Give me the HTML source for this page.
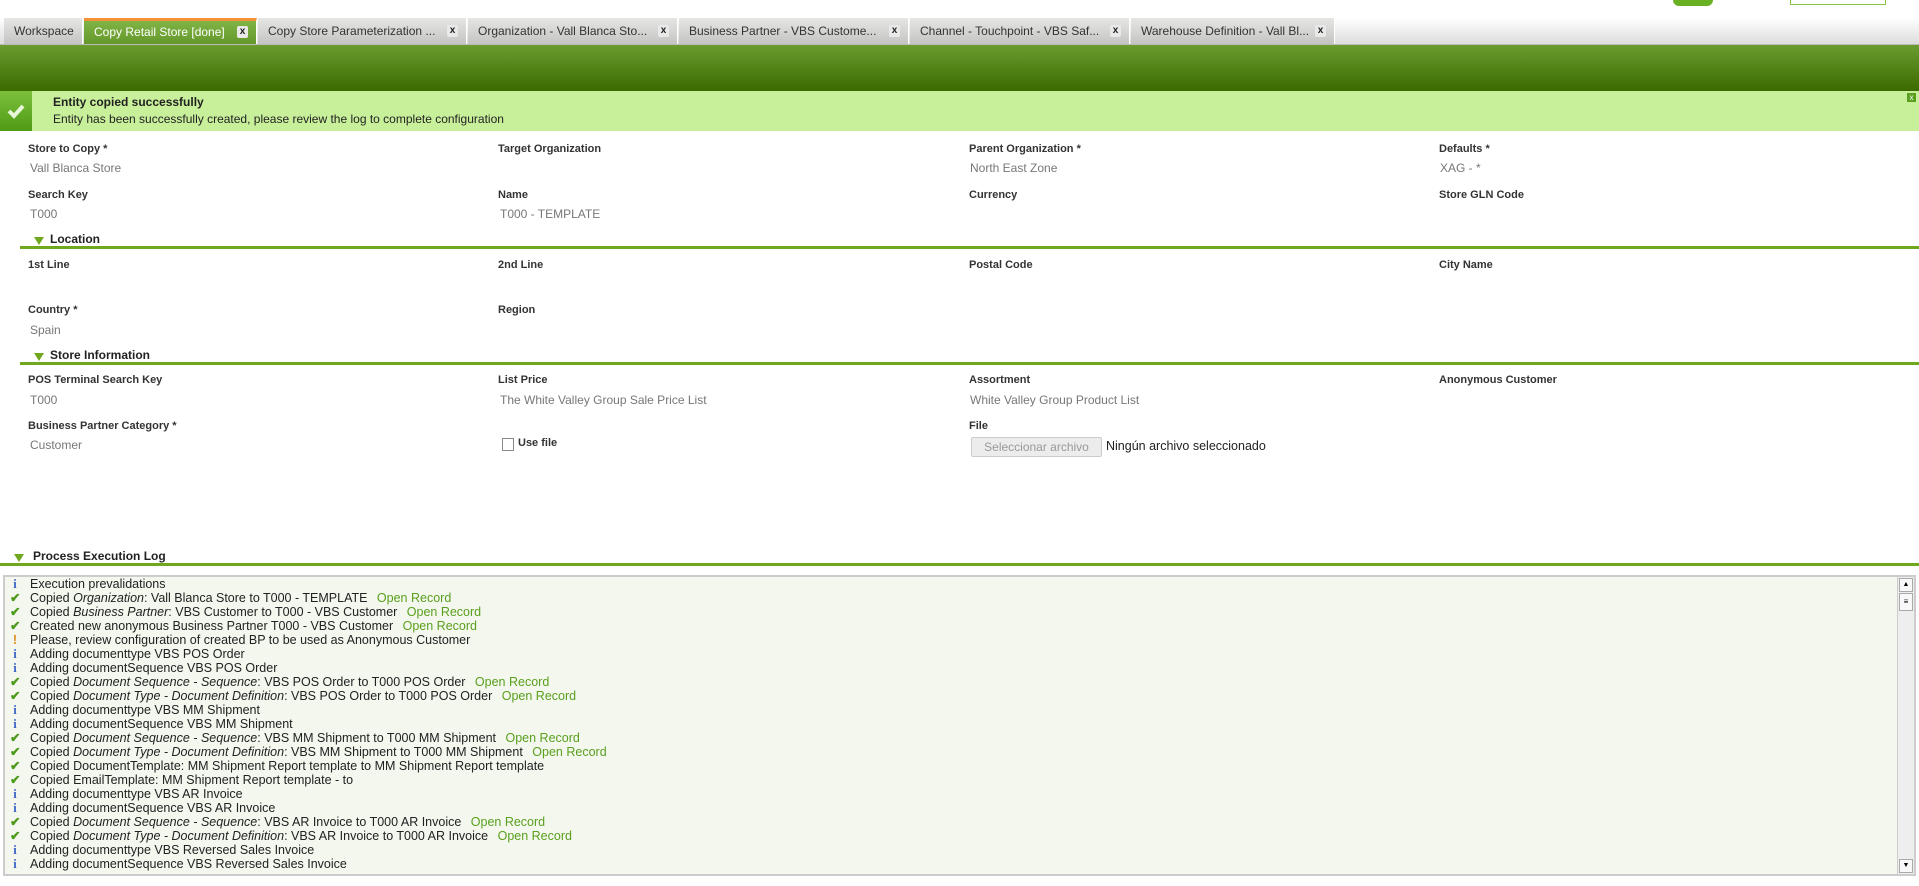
<!DOCTYPE html>
<html><head><meta charset="utf-8"><style>
*{margin:0;padding:0;box-sizing:border-box}
body{width:1919px;height:886px;overflow:hidden;background:#fff;font-family:"Liberation Sans",Arial,sans-serif;position:relative}
.abs{position:absolute}
.tabbar{top:18px;left:0;width:1919px;height:27px;background:linear-gradient(#fff,#ddd);border-bottom:1px solid #bbb}
.tab{position:absolute;top:0;height:26px;background:linear-gradient(#e6e6e4,#c4c4c2);border-right:1px solid #fff;font-size:12px;color:#333;line-height:26px;padding-left:10px;white-space:nowrap;overflow:hidden}
.tab .x{position:absolute;right:8px;top:7px;width:11px;height:12px;background:#e9e9e9;border-radius:2px;font-size:10px;line-height:12px;text-align:center;color:#222;font-weight:bold}
.tab.act{background:linear-gradient(#80b446,#65982b);color:#fff;border-top:3px solid #f39038;line-height:22px}
.tab.act .x{top:5px}
.hdr{top:45px;left:0;width:1919px;height:46px;background:linear-gradient(#6a9c30,#3c6b00)}
.msg{top:91px;left:0;width:1919px;height:40px;background:#c8f09a}
.msg .ic{position:absolute;left:0;top:0;width:32px;height:40px;background:linear-gradient(#7cc03c,#4f9a16)}
.msg .t1{position:absolute;left:53px;top:4px;font-size:12px;font-weight:bold;color:#222}
.msg .t2{position:absolute;left:53px;top:21px;font-size:12px;color:#222}
.lbl{position:absolute;font-size:11px;font-weight:bold;color:#333}
.val{position:absolute;font-size:12px;color:#777}
.sec{position:absolute;left:20px;width:1899px;height:14px;border-bottom:3px solid #6fa81e;font-size:12px;font-weight:bold;color:#222}
.sec span{position:absolute;left:30px;top:-3px}
.sec i{position:absolute;left:14px;top:2px;width:0;height:0;border-left:5px solid transparent;border-right:5px solid transparent;border-top:8px solid #6fa81e}
.log{top:575px;left:3px;width:1913px;height:301px;background:#f3f7ee;border:2px solid #ccc}
.row{position:absolute;left:30px;font-size:12.5px;color:#222;white-space:nowrap;height:14px;line-height:14px}
.row b{position:absolute;left:-20px;font-weight:bold;width:10px;text-align:center}
.i{color:#3c64c8;font-family:"Liberation Serif",serif}
.c{color:#4c9a1a}
.e{color:#e08a1a}
.o{color:#5aa01e;margin-left:6px}
</style></head><body>
<div class="abs" style="top:0;left:1673px;width:40px;height:6px;background:#6ab023;border-radius:0 0 20px 20px"></div>
<div class="abs" style="top:0;left:1790px;width:96px;height:5px;border:1px solid #8bc34a;border-top:none"></div>
<div class="abs tabbar">
<div class="tab" style="left:4px;width:79px">Workspace</div>
<div class="tab act" style="left:84px;width:173px">Copy Retail Store [done]<span class="x">x</span></div>
<div class="tab" style="left:258px;width:209px">Copy Store Parameterization ...<span class="x">x</span></div>
<div class="tab" style="left:468px;width:210px">Organization - Vall Blanca Sto...<span class="x">x</span></div>
<div class="tab" style="left:679px;width:230px">Business Partner - VBS Custome...<span class="x">x</span></div>
<div class="tab" style="left:910px;width:220px">Channel - Touchpoint - VBS Saf...<span class="x">x</span></div>
<div class="tab" style="left:1131px;width:204px">Warehouse Definition - Vall Bl...<span class="x">x</span></div>
</div>
<div class="abs hdr"></div>
<div class="abs msg"><div class="ic"><svg width="32" height="40"><path d="M9 20l5 5 9-10" stroke="#e8f5d8" stroke-width="4" fill="none"/></svg></div>
<div class="t1">Entity copied successfully</div><div class="t2">Entity has been successfully created, please review the log to complete configuration</div>
<div style="position:absolute;right:3px;top:2px;width:9px;height:9px;background:#5aa01e;color:#fff;font-size:8px;line-height:9px;text-align:center">x</div></div>

<div class="lbl" style="left:28px;top:143px">Store to Copy *</div><div class="val" style="left:30px;top:161px">Vall Blanca Store</div>
<div class="lbl" style="left:498px;top:143px">Target Organization</div>
<div class="lbl" style="left:969px;top:143px">Parent Organization *</div><div class="val" style="left:970px;top:161px">North East Zone</div>
<div class="lbl" style="left:1439px;top:143px">Defaults *</div><div class="val" style="left:1440px;top:161px">XAG - *</div>
<div class="lbl" style="left:28px;top:189px">Search Key</div><div class="val" style="left:30px;top:207px">T000</div>
<div class="lbl" style="left:498px;top:189px">Name</div><div class="val" style="left:500px;top:207px">T000 - TEMPLATE</div>
<div class="lbl" style="left:969px;top:189px">Currency</div>
<div class="lbl" style="left:1439px;top:189px">Store GLN Code</div>
<div class="sec" style="top:235px"><i></i><span>Location</span></div>
<div class="lbl" style="left:28px;top:259px">1st Line</div>
<div class="lbl" style="left:498px;top:259px">2nd Line</div>
<div class="lbl" style="left:969px;top:259px">Postal Code</div>
<div class="lbl" style="left:1439px;top:259px">City Name</div>
<div class="lbl" style="left:28px;top:304px">Country *</div><div class="val" style="left:30px;top:323px">Spain</div>
<div class="lbl" style="left:498px;top:304px">Region</div>
<div class="sec" style="top:351px"><i></i><span>Store Information</span></div>
<div class="lbl" style="left:28px;top:374px">POS Terminal Search Key</div><div class="val" style="left:30px;top:393px">T000</div>
<div class="lbl" style="left:498px;top:374px">List Price</div><div class="val" style="left:500px;top:393px">The White Valley Group Sale Price List</div>
<div class="lbl" style="left:969px;top:374px">Assortment</div><div class="val" style="left:970px;top:393px">White Valley Group Product List</div>
<div class="lbl" style="left:1439px;top:374px">Anonymous Customer</div>
<div class="lbl" style="left:28px;top:420px">Business Partner Category *</div><div class="val" style="left:30px;top:438px">Customer</div>
<div class="abs" style="left:502px;top:438px;width:12px;height:13px;border:1px solid #888;background:#fff"></div>
<div class="lbl" style="left:518px;top:437px;font-size:11px">Use file</div>
<div class="lbl" style="left:969px;top:420px">File</div>
<div class="abs" style="left:971px;top:437px;width:131px;height:20px;background:#ececec;border:1px solid #ccc;border-radius:2px;font-size:12px;color:#999;line-height:18px;text-align:center">Seleccionar archivo</div>
<div class="abs" style="left:1106px;top:439px;font-size:12.5px;color:#222">Ningún archivo seleccionado</div>

<div class="sec" style="top:552px;left:0;width:1919px"><i></i><span style="left:33px">Process Execution Log</span></div>
<div class="abs log">
<div class="abs" style="right:0;top:0;width:17px;height:297px;background:#eee;border-left:1px solid #ccc">
<div style="position:absolute;left:1px;top:1px;width:14px;height:14px;background:#f8f8f8;border:1px solid #aaa;font-size:7px;text-align:center;line-height:12px">▲</div>
<div style="position:absolute;left:1px;top:16px;width:14px;height:18px;background:#f8f8f8;border:1px solid #aaa;font-size:8px;text-align:center;line-height:16px">≡</div>
<div style="position:absolute;left:1px;bottom:1px;width:14px;height:14px;background:#f8f8f8;border:1px solid #aaa;font-size:7px;text-align:center;line-height:12px">▼</div>
</div>
</div>
<div class="row" style="top:577px"><b class="i">i</b>Execution prevalidations</div>
<div class="row" style="top:591px"><b class="c">✔</b>Copied <i>Organization</i>: Vall Blanca Store to T000 - TEMPLATE <span class="o">Open Record</span></div>
<div class="row" style="top:605px"><b class="c">✔</b>Copied <i>Business Partner</i>: VBS Customer to T000 - VBS Customer <span class="o">Open Record</span></div>
<div class="row" style="top:619px"><b class="c">✔</b>Created new anonymous Business Partner T000 - VBS Customer <span class="o">Open Record</span></div>
<div class="row" style="top:633px"><b class="e">!</b>Please, review configuration of created BP to be used as Anonymous Customer</div>
<div class="row" style="top:647px"><b class="i">i</b>Adding documenttype VBS POS Order</div>
<div class="row" style="top:661px"><b class="i">i</b>Adding documentSequence VBS POS Order</div>
<div class="row" style="top:675px"><b class="c">✔</b>Copied <i>Document Sequence - Sequence</i>: VBS POS Order to T000 POS Order <span class="o">Open Record</span></div>
<div class="row" style="top:689px"><b class="c">✔</b>Copied <i>Document Type - Document Definition</i>: VBS POS Order to T000 POS Order <span class="o">Open Record</span></div>
<div class="row" style="top:703px"><b class="i">i</b>Adding documenttype VBS MM Shipment</div>
<div class="row" style="top:717px"><b class="i">i</b>Adding documentSequence VBS MM Shipment</div>
<div class="row" style="top:731px"><b class="c">✔</b>Copied <i>Document Sequence - Sequence</i>: VBS MM Shipment to T000 MM Shipment <span class="o">Open Record</span></div>
<div class="row" style="top:745px"><b class="c">✔</b>Copied <i>Document Type - Document Definition</i>: VBS MM Shipment to T000 MM Shipment <span class="o">Open Record</span></div>
<div class="row" style="top:759px"><b class="c">✔</b>Copied DocumentTemplate: MM Shipment Report template to MM Shipment Report template</div>
<div class="row" style="top:773px"><b class="c">✔</b>Copied EmailTemplate: MM Shipment Report template - to</div>
<div class="row" style="top:787px"><b class="i">i</b>Adding documenttype VBS AR Invoice</div>
<div class="row" style="top:801px"><b class="i">i</b>Adding documentSequence VBS AR Invoice</div>
<div class="row" style="top:815px"><b class="c">✔</b>Copied <i>Document Sequence - Sequence</i>: VBS AR Invoice to T000 AR Invoice <span class="o">Open Record</span></div>
<div class="row" style="top:829px"><b class="c">✔</b>Copied <i>Document Type - Document Definition</i>: VBS AR Invoice to T000 AR Invoice <span class="o">Open Record</span></div>
<div class="row" style="top:843px"><b class="i">i</b>Adding documenttype VBS Reversed Sales Invoice</div>
<div class="row" style="top:857px"><b class="i">i</b>Adding documentSequence VBS Reversed Sales Invoice</div>
</body></html>
